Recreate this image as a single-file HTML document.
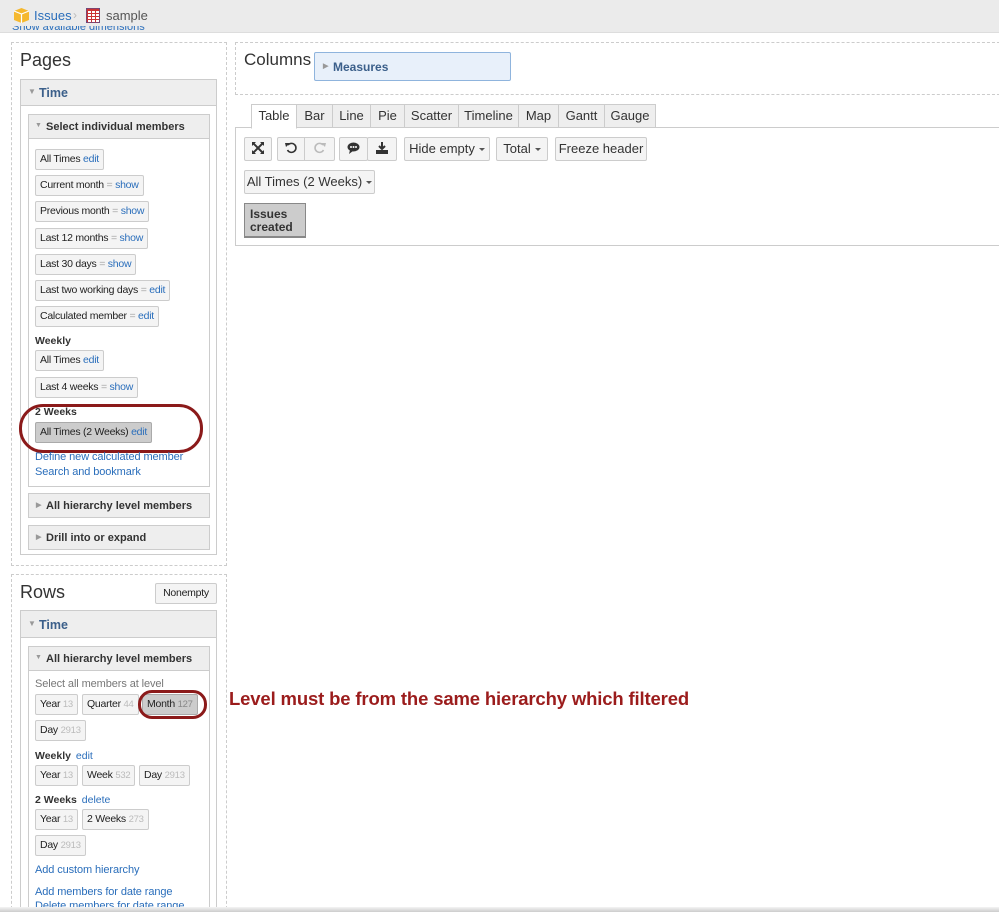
<!DOCTYPE html>
<html><head><meta charset="utf-8"><style>
*{box-sizing:border-box}
html,body{margin:0;width:999px;height:912px;overflow:hidden}
body{background:#fff;font-family:"Liberation Sans",Arial,sans-serif;font-size:11px;color:#333;position:relative}
.a{position:absolute}
.dash{position:absolute;border:1px dashed #ccc}
.btn{position:absolute;height:21px;border:1px solid #ccc;border-radius:2px;background:#f4f4f4;padding:0 4px;line-height:19px;font-size:10.5px;letter-spacing:-0.25px;color:#222;white-space:nowrap}
.btn b{font-weight:normal;color:#2a6ebb}
.btn i{font-style:normal;color:#aaa}
.btn s{text-decoration:none;color:#bbb;font-size:9.5px}
.sel{background:#ccc;border-color:#aaa}
.lnk{position:absolute;color:#2a6ebb;font-size:11px;letter-spacing:-0.1px}
.lbl{position:absolute;font-weight:bold;font-size:10.5px;color:#333}
.hdr{position:absolute;background:#eee;border:1px solid #ccc;font-weight:bold}
.panel{position:absolute;border:1px solid #ccc;background:#fff}
.tb{position:absolute;height:24px;border:1px solid #ccc;background:#f4f4f4;border-radius:2px;font-size:13px;line-height:22px;text-align:center;color:#333}
.tab{position:absolute;top:104px;height:24px;border:1px solid #ccc;background:#eee;font-size:13px;line-height:22px;text-align:center;color:#333}
.car{display:inline-block;width:0;height:0;border-left:3px solid transparent;border-right:3px solid transparent;border-top:3px solid #555;vertical-align:middle;margin-left:4px}
</style></head><body>
<div class="a" style="left:0;top:0;width:999px;height:33px;background:#ebebeb;border-bottom:1px solid #ddd"></div>
<svg class="a" style="left:13px;top:7px" width="17" height="17" viewBox="0 0 17 17"><path d="M1 4 L8.5 1 L16 4 L16 13 L8.5 16 L1 13Z" fill="#f5b82e"/><path d="M8.5 7 L8.5 16" stroke="#fff" stroke-width="1.2"/><path d="M1 4 L8.5 7 L16 4" stroke="#fff" stroke-width="1.2" fill="none"/></svg>
<div class="a" style="left:34px;top:8px;font-size:13px;color:#2a6ebb">Issues</div>
<div class="a" style="left:73px;top:8px;font-size:12px;color:#bbb">›</div>
<svg class="a" style="left:86px;top:8px" width="14" height="15"><rect x="0" y="0" width="14" height="15" fill="#c33"/><g fill="#fff"><rect x="2" y="3" width="3" height="2"/><rect x="6" y="3" width="3" height="2"/><rect x="10" y="3" width="3" height="2"/><rect x="2" y="6" width="3" height="2"/><rect x="6" y="6" width="3" height="2"/><rect x="10" y="6" width="3" height="2"/><rect x="2" y="9" width="3" height="2"/><rect x="6" y="9" width="3" height="2"/><rect x="10" y="9" width="3" height="2"/><rect x="2" y="12" width="3" height="2"/><rect x="6" y="12" width="3" height="2"/><rect x="10" y="12" width="3" height="2"/></g><rect x="0" y="0" width="14" height="15" fill="none" stroke="#35a" stroke-width="1"/></svg>
<div class="a" style="left:106px;top:8px;font-size:13px;color:#555">sample</div>
<div class="a" style="left:12px;top:26px;height:7px;overflow:hidden;font-size:11px;color:#2a6ebb;line-height:11px"><div style="margin-top:-4px">Show available dimensions</div></div>

<!-- Pages -->
<div class="dash" style="left:11px;top:42px;width:216px;height:524px"></div>
<div class="a" style="left:20px;top:50px;font-size:18px;color:#333">Pages</div>
<div class="panel" style="left:20px;top:79px;width:197px;height:476px"></div>
<div class="hdr" style="left:20px;top:79px;width:197px;height:27px;font-size:12.5px;color:#3b5f8a;padding:6px 0 0 18px"><span class="a" style="left:7px;top:7px;font-size:8px;color:#999">▼</span>Time</div>
<div class="panel" style="left:28px;top:114px;width:182px;height:373px"></div>
<div class="hdr" style="left:28px;top:114px;width:182px;height:25px;font-size:11px;color:#333;padding:6px 0 0 17px"><span class="a" style="left:6px;top:7px;font-size:7px;color:#999">▼</span>Select individual members</div>
<div class="btn" style="left:35px;top:149px">All Times <b>edit</b></div>
<div class="btn" style="left:35px;top:175px">Current month <i>=</i> <b>show</b></div>
<div class="btn" style="left:35px;top:201px">Previous month <i>=</i> <b>show</b></div>
<div class="btn" style="left:35px;top:228px">Last 12 months <i>=</i> <b>show</b></div>
<div class="btn" style="left:35px;top:254px">Last 30 days <i>=</i> <b>show</b></div>
<div class="btn" style="left:35px;top:280px">Last two working days <i>=</i> <b>edit</b></div>
<div class="btn" style="left:35px;top:306px">Calculated member <i>=</i> <b>edit</b></div>
<div class="lbl" style="left:35px;top:335px">Weekly</div>
<div class="btn" style="left:35px;top:350px">All Times <b>edit</b></div>
<div class="btn" style="left:35px;top:377px">Last 4 weeks <i>=</i> <b>show</b></div>
<div class="lbl" style="left:35px;top:406px">2 Weeks</div>
<div class="btn sel" style="left:35px;top:422px">All Times (2 Weeks) <b>edit</b></div>
<div class="a" style="left:19px;top:404px;width:184px;height:49px;border:3px solid #8b1a1a;border-radius:24px"></div>
<div class="lnk" style="left:35px;top:451px">Define new calculated member</div>
<div class="lnk" style="left:35px;top:466px">Search and bookmark</div>
<div class="hdr" style="left:28px;top:493px;width:182px;height:25px;font-size:11px;color:#333;padding:6px 0 0 17px"><span class="a" style="left:7px;top:7px;font-size:7px;color:#999">▶</span>All hierarchy level members</div>
<div class="hdr" style="left:28px;top:525px;width:182px;height:25px;font-size:11px;color:#333;padding:6px 0 0 17px"><span class="a" style="left:7px;top:7px;font-size:7px;color:#999">▶</span>Drill into or expand</div>

<!-- Rows -->
<div class="dash" style="left:11px;top:574px;width:216px;height:345px"></div>
<div class="a" style="left:20px;top:582px;font-size:18px;color:#333">Rows</div>
<div class="btn" style="left:155px;top:583px;height:21px;padding:0 7px;width:62px;text-align:center">Nonempty</div>
<div class="panel" style="left:20px;top:610px;width:197px;height:310px"></div>
<div class="hdr" style="left:20px;top:610px;width:197px;height:28px;font-size:12.5px;color:#3b5f8a;padding:7px 0 0 18px"><span class="a" style="left:7px;top:8px;font-size:8px;color:#999">▼</span>Time</div>
<div class="panel" style="left:28px;top:646px;width:182px;height:270px"></div>
<div class="hdr" style="left:28px;top:646px;width:182px;height:25px;font-size:11px;color:#333;padding:6px 0 0 17px"><span class="a" style="left:6px;top:7px;font-size:7px;color:#999">▼</span>All hierarchy level members</div>
<div class="a" style="left:35px;top:678px;color:#777;letter-spacing:-0.1px">Select all members at level</div>
<div class="btn" style="left:35px;top:694px">Year <s>13</s></div>
<div class="btn" style="left:82px;top:694px">Quarter <s>44</s></div>
<div class="btn sel" style="left:142px;top:694px">Month <s style="color:#888">127</s></div>
<div class="a" style="left:138px;top:690px;width:69px;height:29px;border:3px solid #8b1a1a;border-radius:14px"></div>
<div class="btn" style="left:35px;top:720px">Day <s>2913</s></div>
<div class="lbl" style="left:35px;top:750px">Weekly <span style="font-weight:normal;color:#2a6ebb;margin-left:2px">edit</span></div>
<div class="btn" style="left:35px;top:765px">Year <s>13</s></div>
<div class="btn" style="left:82px;top:765px">Week <s>532</s></div>
<div class="btn" style="left:139px;top:765px">Day <s>2913</s></div>
<div class="lbl" style="left:35px;top:794px">2 Weeks <span style="font-weight:normal;color:#2a6ebb;margin-left:2px">delete</span></div>
<div class="btn" style="left:35px;top:809px">Year <s>13</s></div>
<div class="btn" style="left:82px;top:809px">2 Weeks <s>273</s></div>
<div class="btn" style="left:35px;top:835px">Day <s>2913</s></div>
<div class="lnk" style="left:35px;top:864px">Add custom hierarchy</div>
<div class="lnk" style="left:35px;top:886px">Add members for date range</div>
<div class="lnk" style="left:35px;top:900px">Delete members for date range</div>
<div class="a" style="left:0;top:907px;width:999px;height:5px;background:linear-gradient(#f4f4f4,#ccc)"></div>

<div class="a" style="left:229px;top:688px;font-size:18.5px;font-weight:bold;color:#9b1c1c;letter-spacing:-0.15px">Level must be from the same hierarchy which filtered</div>

<!-- Columns -->
<div class="dash" style="left:235px;top:42px;width:770px;height:53px"></div>
<div class="a" style="left:244px;top:50px;font-size:17px;color:#333">Columns</div>
<div class="a" style="left:314px;top:52px;width:197px;height:29px;background:#e8f0fa;border:1px solid #8fb4dd;border-radius:2px;padding:7px 0 0 18px;font-weight:bold;font-size:12px;color:#3b5f8a"><span class="a" style="left:8px;top:9px;font-size:7px;color:#999">▶</span>Measures</div>

<div class="a" style="left:235px;top:127px;width:770px;height:119px;border:1px solid #ccc;border-right:none"></div>
<div class="tab" style="left:251px;width:46px;background:#fff;border-bottom-color:#fff;height:25px">Table</div>
<div class="tab" style="left:296px;width:37px">Bar</div>
<div class="tab" style="left:332px;width:39px">Line</div>
<div class="tab" style="left:370px;width:35px">Pie</div>
<div class="tab" style="left:404px;width:55px">Scatter</div>
<div class="tab" style="left:458px;width:61px">Timeline</div>
<div class="tab" style="left:518px;width:41px">Map</div>
<div class="tab" style="left:558px;width:47px">Gantt</div>
<div class="tab" style="left:604px;width:52px">Gauge</div>

<div class="tb" style="left:244px;top:137px;width:28px"><svg width="12" height="12" viewBox="0 0 12 12" style="vertical-align:-1px"><path d="M1 1L11 11M11 1L1 11" stroke="#333" stroke-width="2"/><path d="M0 0h4L0 4zM12 0h-4l4 4zM0 12h4l-4-4zM12 12h-4l4-4z" fill="#333"/></svg></div>
<div class="tb" style="left:277px;top:137px;width:28px;border-radius:2px 0 0 2px"><svg width="12" height="12" viewBox="0 0 12 12" style="vertical-align:-1px"><path d="M3 3A4.5 4.5 0 1 1 2.5 8" stroke="#333" stroke-width="1.6" fill="none"/><path d="M0 1L5 1L1 5Z" fill="#333"/></svg></div>
<div class="tb" style="left:304px;top:137px;width:31px;border-radius:0 2px 2px 0"><svg width="12" height="12" viewBox="0 0 12 12" style="vertical-align:-1px"><path d="M9 3A4.5 4.5 0 1 0 9.5 8" stroke="#bbb" stroke-width="1.6" fill="none"/><path d="M12 1L7 1L11 5Z" fill="#bbb"/></svg></div>
<div class="tb" style="left:339px;top:137px;width:29px"><svg width="13" height="12" viewBox="0 0 13 12" style="vertical-align:-1px"><ellipse cx="6.5" cy="5" rx="6" ry="4.5" fill="#333"/><path d="M3 8L2 12L6 9Z" fill="#333"/><g fill="#fff"><circle cx="4" cy="5" r="1"/><circle cx="6.5" cy="5" r="1"/><circle cx="9" cy="5" r="1"/></g></svg></div>
<div class="tb" style="left:367px;top:137px;width:30px"><svg width="12" height="12" viewBox="0 0 12 12" style="vertical-align:-1px"><path d="M6 0V7M3 4L6 7L9 4" stroke="#333" stroke-width="2" fill="none"/><rect x="0" y="8" width="12" height="4" fill="#333"/></svg></div>
<div class="tb" style="left:404px;top:137px;width:86px">Hide empty<span class="car"></span></div>
<div class="tb" style="left:496px;top:137px;width:52px">Total<span class="car"></span></div>
<div class="tb" style="left:555px;top:137px;width:92px">Freeze header</div>
<div class="tb" style="left:244px;top:170px;width:131px">All Times (2 Weeks)<span class="car"></span></div>
<div class="a" style="left:244px;top:203px;width:62px;height:35px;background:#ccc;border:1px solid #888;border-bottom-width:2px;padding:4px 0 0 5px;font-weight:bold;font-size:12px;line-height:13px;color:#333">Issues<br>created</div>
</body></html>
